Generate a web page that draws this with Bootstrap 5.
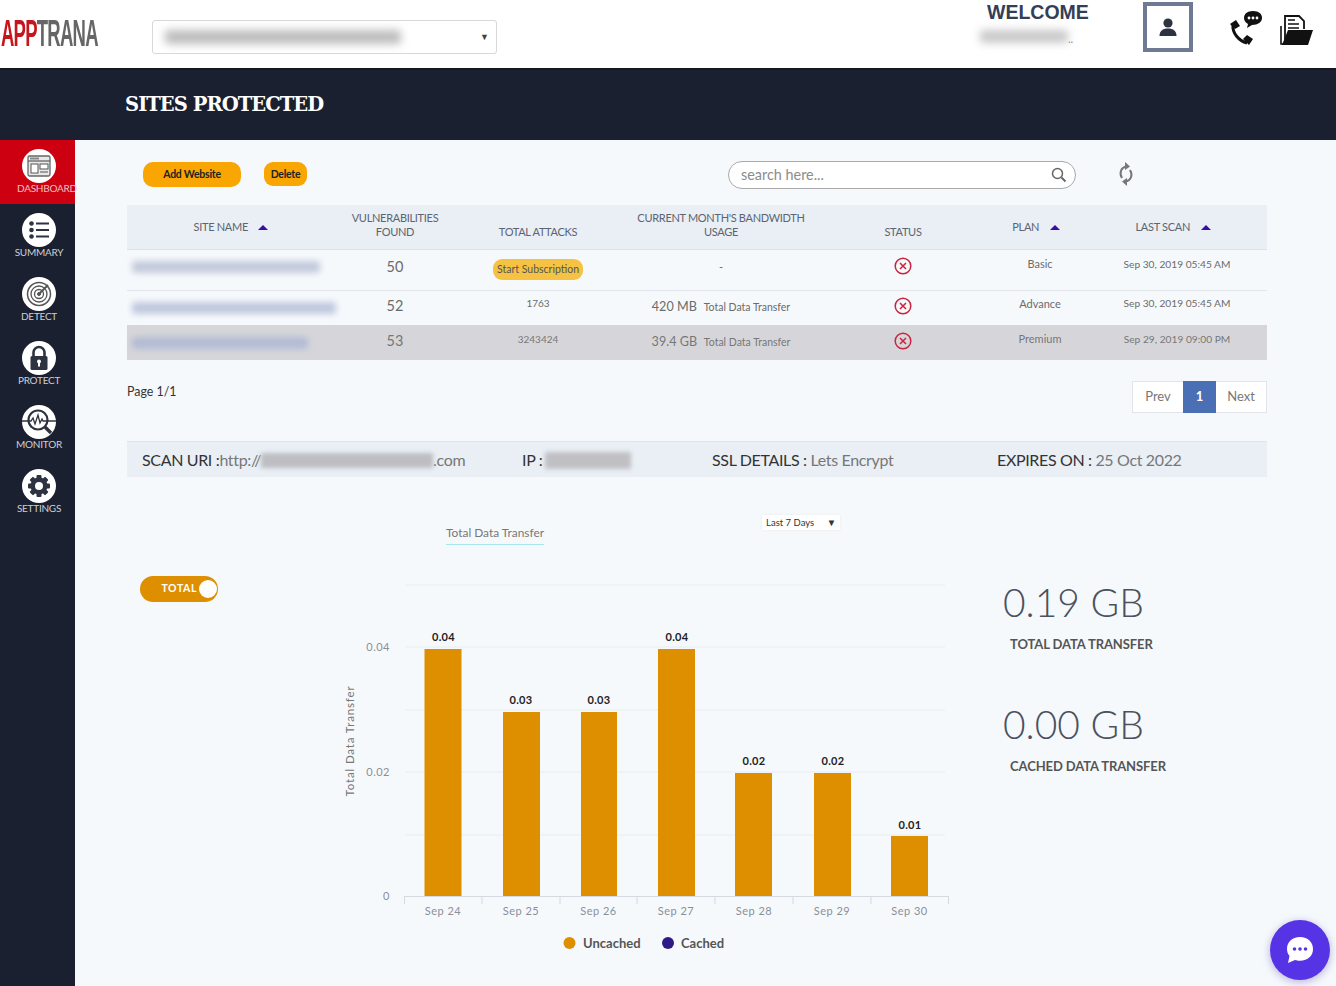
<!DOCTYPE html>
<html lang="en">
<head>
<meta charset="utf-8">
<title>AppTrana - Sites Protected</title>
<link href="https://cdn.jsdelivr.net/npm/bootstrap@5.3.0/dist/css/bootstrap.min.css" rel="stylesheet">
<style>
html,body{height:100%}
body{font-family:Lato,"Liberation Sans",sans-serif;background:#f6f9fc;color:#555;overflow:hidden}
.top-head{height:70px;background:#fff;border-bottom:2px solid #14181f;padding-left:1px}
.logo-wrap{width:151px;height:36px;overflow:visible;flex:none}
.logo-text{font-family:"Liberation Sans",sans-serif;font-size:37px;line-height:36px;letter-spacing:-1.5px;display:inline-block;transform:scaleX(.5);transform-origin:left center;white-space:nowrap;font-weight:700}
.logo-text b{color:#c4161c;font-weight:700}
.logo-text span{color:#666}
.site-pick{width:345px;height:34px;border:1px solid #d8d8d8;border-radius:3px;padding:0 7px 0 12px;margin-top:6px;background:#fff;flex:none}
.blur-txt{display:block;filter:blur(3px);border-radius:3px}
.pick-blur{width:236px;height:14px;background:#bdbdbd;filter:blur(4px)}
.pick-arrow{font-size:9px;color:#444}
.welcome-box{width:163px;margin-left:483px;margin-top:-24px;flex:none}
.welcome-word{font-family:"Liberation Sans",sans-serif;font-weight:700;font-size:19.5px;color:#343f55;line-height:22px;padding-left:7px}
.name-row{margin-top:7px}
.name-blur{width:88px;height:13px;background:#c8c8c8;filter:blur(4px)}
.dots{font-size:11px;line-height:8px;color:#888}
.user-box{width:50px;height:50px;border:4px solid #6e7a94;margin-top:-14px;flex:none}
.call-ico{margin:-12px 0 0 35px}
.file-ico{margin:-8px 0 0 16px}
.title-bar{height:70px;background:#1b2030;padding-left:125px;color:#fff;font-family:"DejaVu Serif",serif;font-weight:700;font-size:19.5px;letter-spacing:-.95px;line-height:70px}
.side-rail{width:75px;height:846px;background:#1b2030;flex:none}
.rail-item{height:64px;padding-top:9px;color:#cfcfd4;font-size:10px;letter-spacing:-.25px;line-height:12px;white-space:nowrap;text-align:center}
.rail-item.on{background:#cc0010;color:#f0c0c4}
.rail-disc{width:34px;height:34px;background:#fff;border-radius:50%;margin:0 auto -1px 22px;display:flex;align-items:center;justify-content:center}
.rail-item span{display:block;width:78px}
.rail-item.on span{text-align:left;padding-left:17px}
.page-main{padding:21px 69px 0 52px;min-width:0}
.tool-row{height:28px}
.amber-btn{background:#f9a602;color:#222;font-size:10.5px;font-weight:700;border:0;padding:0;line-height:25px;height:25px;letter-spacing:-.25px}
.btn-add{width:98px;border-radius:10px;margin:1px 0 0 16px}
.btn-del{width:43px;border-radius:9px;margin:1px 0 0 23px;line-height:24px;height:24px}
.find-box{width:348px;height:28px;border:1px solid #a9a9a9;border-radius:14px;background:#fff;margin-left:421px;padding:0 8px 0 12px;font-size:14.4px;color:#8c8c8c}
.sync-ico{margin-left:40px}
.site-tbl{table-layout:fixed;width:1140px;margin:16px 0 0;--bs-table-bg:transparent;border-collapse:collapse;color:#666}
.site-tbl th{background:#e9eff5;height:44px;font-size:11px;font-weight:400;color:#5d6470;padding:0 0 10px;text-align:center;vertical-align:bottom;line-height:14px;letter-spacing:-.3px;border-bottom:1px solid #dde2e8;text-transform:uppercase}
.site-tbl th.mid-h{vertical-align:middle;padding:0 8px 0 0}
.site-tbl td{padding:0;text-align:center;vertical-align:middle;font-size:11px;border-bottom:1px solid #e2e6ea;color:#6b6b6b;background:transparent}
.site-tbl tr.r-a td{height:41px}
.site-tbl tr.r-b td{height:35px;border-bottom:0}
.site-tbl tr.r-c td{height:35px;background:#d6d6da;border-bottom:0;color:#777}
.site-tbl td.num-big{font-size:14.5px}
.site-tbl td.tiny-num{font-size:10px}
.site-tbl td.scan-date{font-size:10.2px}
.lift-6{padding-bottom:6px!important}
.lift-10{padding-bottom:10px!important}
.up-tri{display:inline-block;width:0;height:0;border:5px solid transparent;border-top:0;border-bottom:5px solid #3a0ca3;margin-left:8px;vertical-align:1px}
.mb-size{font-size:12.6px}
.mb-note{font-size:10.5px;margin-left:4px}
.sub-pill{display:inline-block;background:#f6c244;border-radius:9px;color:#555;font-size:10.5px;line-height:21px;width:90px}
.name-a{width:188px;height:12px;margin-left:5px;background:#c3cadb}
.name-b{width:204px;height:12px;margin-left:5px;background:#bfc8de}
.name-c{width:176px;height:12px;margin-left:5px;background:#b3bbd4}
.pager-row{margin-top:21px;height:32px}
.page-lbl{font-size:12.4px;color:#333;margin-top:2px}
.pager-row .pagination{--bs-pagination-font-size:13px;--bs-pagination-padding-y:0;--bs-pagination-padding-x:0;--bs-pagination-color:#777;--bs-pagination-border-color:#e1e4e8;--bs-pagination-border-radius:0;--bs-pagination-active-bg:#4a6fb5;--bs-pagination-active-border-color:#4a6fb5}
.pager-row .page-link{line-height:29px;padding-bottom:1px;text-align:center;width:52px;background:#fff}
.pager-row .active .page-link{width:33px;background:#4a6fb5;font-weight:700}
.scan-bar{margin-top:28px;height:36px;background:#e9eff5;border-top:1px solid #dfe4ea;padding:0 0 0 15px;font-size:16px;color:#333;letter-spacing:-.35px}
.scan-bar i{font-style:normal;color:#777}
.scan-1{width:380px}.scan-2{width:190px}.scan-3{width:285px}
.uri-blur{width:172px;height:15px;background:#bdbdc2;filter:blur(2px);display:inline-block;vertical-align:-2px}
.ip-blur{width:86px;height:17px;background:#c0c0c4;filter:blur(2px);display:inline-block;vertical-align:-3px;margin-left:3px}
.chart-head{margin-top:38px;height:30px}
.chart-name{margin:10px 0 0 319px;font-size:11.9px;color:#777;line-height:16px;border-bottom:1px solid #a8e6ee;height:20px;white-space:nowrap}
.range-pick{margin-left:218px;width:78px;height:15px;background:#fff;font-size:9.5px;color:#333;line-height:15px;padding:0 4px;box-shadow:0 0 2px #e5e5e5}
.chart-row{margin-top:31px}
.left-col{width:213px;padding-left:13px;flex:none}
.total-tog{width:78px;height:26px;background:#de8f00;border-radius:13px;color:#fff;font-size:10.5px;font-weight:700;letter-spacing:.6px;padding-right:1px;margin-bottom:0}
.tog-knob{width:18px;height:18px;background:#fff;border-radius:50%;margin-left:2px}
.chart-svg{width:620px;height:390px;flex:none;display:block}
.chart-svg text{font-family:Lato,"Liberation Sans",sans-serif}
.stat-col{padding-left:43px;color:#444}
.stat-num{font-size:39px;font-weight:300;line-height:50px;margin-top:1px;color:#4a5160}
.stat-lbl{font-size:13px;font-weight:700;color:#555;letter-spacing:-.1px;padding-left:7px;margin:8px 0 46px;line-height:18px}
.chat-fab{position:fixed;left:1270px;top:920px;width:60px;height:60px;border-radius:50%;background:#5733e6;box-shadow:0 2px 8px rgba(60,40,160,.35)}
</style>
</head>
<body>
<header class="top-head d-flex align-items-center">
  <div class="logo-wrap"><div class="logo-text"><b>APP</b><span>TRANA</span></div></div>
  <div class="site-pick d-flex align-items-center justify-content-between">
    <span class="blur-txt pick-blur"></span><span class="pick-arrow">&#9660;</span>
  </div>
  <div class="welcome-box">
    <div class="welcome-word">WELCOME</div>
    <div class="name-row d-flex align-items-end"><span class="blur-txt name-blur"></span><span class="dots">..</span></div>
  </div>
  <div class="user-box d-flex align-items-center justify-content-center">
    <svg width="20" height="20" viewBox="0 0 20 20"><circle cx="10" cy="6" r="4.600" fill="#2d3340"/><path d="M1.500 19c0-5 3-7.500 8.500-7.500s8.500 2.500 8.500 7.500z" fill="#2d3340"/></svg>
  </div>
  <svg class="call-ico" width="36" height="36" viewBox="0 0 36 36">
    <path d="M5 15C4 23 11 31 19 33" fill="none" stroke="#111" stroke-width="3"/>
    <path d="M2 14l6-4 4 6-5 3zM15 29l4-4 6 4-4 6z" fill="#111"/>
    <path d="M25 1c-6 0-9 3-9 7 0 3 2 5 4 6l-1 4 5-3c6 0 10-3 10-7s-3-7-9-7z" fill="#111"/>
    <circle cx="21" cy="8" r="1.400" fill="#fff"/><circle cx="25" cy="8" r="1.400" fill="#fff"/><circle cx="29" cy="8" r="1.400" fill="#fff"/>
  </svg>
  <svg class="file-ico" width="34" height="34" viewBox="0 0 34 34">
    <path d="M5 30V3h14l5 5v8" fill="#fff" stroke="#111" stroke-width="1.800"/>
    <path d="M8 11h11M8 15h11M8 7h7" stroke="#111" stroke-width="1.600"/>
    <path d="M1 13v18h3" fill="none" stroke="#111" stroke-width="1.600"/>
    <path d="M8 17h25l-5 15H2z" fill="#111"/>
  </svg>
</header>
<div class="title-bar">SITES PROTECTED</div>
<div class="d-flex">
  <nav class="side-rail">
    <div class="rail-item on"><div class="rail-disc"><svg width="26" height="24" viewBox="0 0 26 24"><rect x="2" y="2" width="22" height="20" rx="1.500" fill="#e8e8e8" stroke="#666" stroke-width="1.300"/><path d="M2 7h22" stroke="#666" stroke-width="1.300"/><rect x="4" y="3.500" width="9" height="2" fill="#888"/><rect x="5" y="10" width="7" height="9" fill="#fff" stroke="#555"/><rect x="14" y="10" width="8" height="5" fill="#fff" stroke="#555"/><path d="M14 18h8" stroke="#555"/></svg></div><span>DASHBOARD</span></div>
    <div class="rail-item"><div class="rail-disc"><svg width="22" height="20" viewBox="0 0 22 20"><circle cx="3.500" cy="3.500" r="2.300" fill="#2d3340"/><circle cx="3.500" cy="10" r="2.300" fill="#2d3340"/><circle cx="3.500" cy="16.500" r="2.300" fill="#2d3340"/><path d="M8 3.500h13M8 10h13M8 16.500h13" stroke="#2d3340" stroke-width="1.800"/></svg></div><span>SUMMARY</span></div>
    <div class="rail-item"><div class="rail-disc"><svg width="26" height="26" viewBox="0 0 26 26" fill="none" stroke="#555"><circle cx="13" cy="13" r="11.500" stroke-width="1.500"/><circle cx="13" cy="13" r="8" stroke-width="1.300"/><circle cx="13" cy="13" r="4.500" stroke-width="1.300"/><circle cx="13" cy="13" r="1.500" fill="#555"/><path d="M13 13L22 4" stroke-width="2"/></svg></div><span>DETECT</span></div>
    <div class="rail-item"><div class="rail-disc"><svg width="20" height="26" viewBox="0 0 20 26"><path d="M4.500 12V7.500a5.500 5.500 0 0 1 11 0V12" fill="none" stroke="#2d3340" stroke-width="2.600"/><rect x="1.500" y="11" width="17" height="14" rx="1.500" fill="#2d3340"/><circle cx="10" cy="16.500" r="2" fill="#fff"/><rect x="9" y="17" width="2" height="4.500" fill="#fff"/></svg></div><span>PROTECT</span></div>
    <div class="rail-item"><div class="rail-disc"><svg width="34" height="30" viewBox="0 0 34 30" fill="none" stroke="#2d3340"><circle cx="16" cy="13" r="9.500" stroke-width="2.200"/><path d="M0 14h9l2-3 2 6 3-9 2 8 2-4 1 2h13" stroke-width="1.300"/><path d="M23 20l6 6" stroke-width="3.400"/></svg></div><span>MONITOR</span></div>
    <div class="rail-item"><div class="rail-disc"><svg width="24" height="24" viewBox="0 0 24 24"><g fill="#2d3340"><circle cx="12" cy="12" r="8.500"/><rect x="9.500" y="1" width="5" height="22" rx="1"/><rect x="9.500" y="1" width="5" height="22" rx="1" transform="rotate(45 12 12)"/><rect x="9.500" y="1" width="5" height="22" rx="1" transform="rotate(90 12 12)"/><rect x="9.500" y="1" width="5" height="22" rx="1" transform="rotate(135 12 12)"/></g><circle cx="12" cy="12" r="4" fill="#fff"/></svg></div><span>SETTINGS</span></div>
  </nav>
  <main class="page-main flex-grow-1">
    <div class="tool-row d-flex align-items-start">
      <button class="btn amber-btn btn-add" type="button">Add Website</button>
      <button class="btn amber-btn btn-del" type="button">Delete</button>
      <div class="find-box d-flex align-items-center justify-content-between">
        <span>search here...</span>
        <svg width="16" height="16" viewBox="0 0 16 16" fill="none" stroke="#666" stroke-width="1.500"><circle cx="6.500" cy="6.500" r="5"/><path d="M10.500 10.500l4 4" stroke-width="2"/></svg>
      </div>
      <svg class="sync-ico" width="20" height="26" viewBox="0 0 20 26" fill="none" stroke="#777" stroke-width="2"><path d="M10 5.500C5 6.500 3 12 6 17"/><path d="M10 20.500C15 19.500 17 14 14 9"/><path d="M9 1l5 4.500-5 3.500z" fill="#777" stroke="none"/><path d="M11 25l-5-4.500 5-3.500z" fill="#777" stroke="none"/></svg>
    </div>
    <table class="table site-tbl">
      <colgroup><col style="width:216px"><col style="width:104px"><col style="width:182px"><col style="width:184px"><col style="width:180px"><col style="width:94px"><col style="width:180px"></colgroup>
      <thead><tr>
        <th class="mid-h">Site Name <span class="up-tri"></span></th>
        <th>Vulnerabilities<br>Found</th>
        <th>Total Attacks</th>
        <th>Current Month's Bandwidth<br>Usage</th>
        <th>Status</th>
        <th class="mid-h">Plan <span class="up-tri"></span></th>
        <th class="mid-h">Last Scan <span class="up-tri"></span></th>
      </tr></thead>
      <tbody>
        <tr class="r-a"><td class="lift-6"><span class="blur-txt name-a"></span></td><td class="num-big lift-6">50</td><td><span class="sub-pill">Start Subscription</span></td><td class="pb-1">-</td><td class="pb-2"><svg width="18" height="18" viewBox="0 0 18 18" fill="none" stroke="#c8243c" stroke-width="1.500"><circle cx="9" cy="9" r="7.800"/><path d="M6 6l6 6M12 6l-6 6"/></svg></td><td class="lift-10">Basic</td><td class="scan-date lift-10">Sep 30, 2019 05:45 AM</td></tr>
        <tr class="r-b"><td><span class="blur-txt name-b"></span></td><td class="num-big pb-1">52</td><td class="tiny-num pb-2">1763</td><td><span class="mb-size">420 MB</span> <span class="mb-note">Total Data Transfer</span></td><td class="pb-1"><svg width="18" height="18" viewBox="0 0 18 18" fill="none" stroke="#c8243c" stroke-width="1.500"><circle cx="9" cy="9" r="7.800"/><path d="M6 6l6 6M12 6l-6 6"/></svg></td><td class="pb-2">Advance</td><td class="scan-date pb-2">Sep 30, 2019 05:45 AM</td></tr>
        <tr class="r-c"><td><span class="blur-txt name-c"></span></td><td class="num-big pb-1">53</td><td class="tiny-num lift-6">3243424</td><td><span class="mb-size">39.4 GB</span> <span class="mb-note">Total Data Transfer</span></td><td class="pb-1"><svg width="18" height="18" viewBox="0 0 18 18" fill="none" stroke="#c8243c" stroke-width="1.500"><circle cx="9" cy="9" r="7.800"/><path d="M6 6l6 6M12 6l-6 6"/></svg></td><td class="lift-6">Premium</td><td class="scan-date lift-6">Sep 29, 2019 09:00 PM</td></tr>
      </tbody>
    </table>
    <div class="pager-row d-flex justify-content-between">
      <div class="page-lbl">Page 1/1</div>
      <ul class="pagination mb-0">
        <li class="page-item"><a class="page-link" href="#">Prev</a></li>
        <li class="page-item active"><a class="page-link" href="#">1</a></li>
        <li class="page-item"><a class="page-link" href="#">Next</a></li>
      </ul>
    </div>
    <div class="scan-bar d-flex align-items-center">
      <div class="scan-1">SCAN URI :<i>http://</i><span class="uri-blur"></span><i>.com</i></div>
      <div class="scan-2">IP :<span class="ip-blur"></span></div>
      <div class="scan-3">SSL DETAILS : <i>Lets Encrypt</i></div>
      <div>EXPIRES ON : <i>25 Oct 2022</i></div>
    </div>
    <div class="chart-head d-flex align-items-start">
      <div class="chart-name">Total Data Transfer</div>
      <div class="range-pick d-flex justify-content-between"><span>Last 7 Days</span><span>&#9660;</span></div>
    </div>
    <div class="chart-row d-flex">
      <div class="left-col">
        <div class="total-tog d-flex align-items-center justify-content-end">TOTAL<span class="tog-knob"></span></div>
      </div>
      <svg class="chart-svg" viewBox="340 576 620 390">
        <g stroke="#eef1f4" stroke-width="1.500"><path d="M405 585H945M405 647H945M405 710H945M405 772H945M405 835H945"/></g>
        <g fill="#de8f00">
          <rect x="424.500" y="649" width="37" height="247"/><rect x="503" y="712" width="37" height="184"/><rect x="581" y="712" width="36" height="184"/><rect x="658" y="649" width="37" height="247"/><rect x="735" y="773" width="37" height="123"/><rect x="814" y="773" width="37" height="123"/><rect x="891" y="836" width="37" height="60"/>
        </g>
        <path d="M404 896.500H949M404.500 896v8M482 896v8M560 896v8M637 896v8M715 896v8M793 896v8M871 896v8M948.500 896v8" stroke="#d5d9e0" fill="none"/>
        <g font-size="11" font-weight="700" fill="#222" text-anchor="middle" letter-spacing=".3">
          <text x="443.500" y="641">0.04</text><text x="521" y="704">0.03</text><text x="599" y="704">0.03</text><text x="677" y="641">0.04</text><text x="754" y="765">0.02</text><text x="833" y="765">0.02</text><text x="910" y="829">0.01</text>
        </g>
        <g font-size="11" fill="#8a8f98" text-anchor="middle" letter-spacing=".5">
          <text x="443" y="915">Sep 24</text><text x="521" y="915">Sep 25</text><text x="598.500" y="915">Sep 26</text><text x="676" y="915">Sep 27</text><text x="754" y="915">Sep 28</text><text x="832" y="915">Sep 29</text><text x="909.500" y="915">Sep 30</text>
        </g>
        <g font-size="11" fill="#8a8f98" text-anchor="end" letter-spacing=".5">
          <text x="390" y="651">0.04</text><text x="390" y="776">0.02</text><text x="390" y="900">0</text>
        </g>
        <text transform="translate(354 741) rotate(-90)" font-size="11.500" fill="#777" text-anchor="middle" letter-spacing=".85">Total Data Transfer</text>
        <circle cx="569.500" cy="943" r="6" fill="#de8f00"/><text x="583" y="947.500" font-size="13" font-weight="700" fill="#555">Uncached</text>
        <circle cx="668" cy="943" r="6" fill="#2d1a87"/><text x="681" y="947.500" font-size="13" font-weight="700" fill="#555">Cached</text>
      </svg>
      <div class="stat-col">
        <div class="stat-num">0.19 GB</div>
        <div class="stat-lbl">TOTAL DATA TRANSFER</div>
        <div class="stat-num">0.00 GB</div>
        <div class="stat-lbl">CACHED DATA TRANSFER</div>
      </div>
    </div>
  </main>
</div>
<div class="chat-fab d-flex align-items-center justify-content-center">
  <svg width="30" height="28" viewBox="0 0 30 28"><path d="M15 1C7 1 2 6 2 13c0 3 1 5 2.500 7L3 27l7-3c1.500.5 3 .7 5 .7 8 0 13-5 13-11.700S23 1 15 1z" fill="#fff"/><circle cx="9.500" cy="13" r="1.800" fill="#5733e6"/><circle cx="15" cy="13" r="1.800" fill="#5733e6"/><circle cx="20.500" cy="13" r="1.800" fill="#5733e6"/></svg>
</div>
<script src="https://cdn.jsdelivr.net/npm/bootstrap@5.3.0/dist/js/bootstrap.bundle.min.js"></script>
</body>
</html>
